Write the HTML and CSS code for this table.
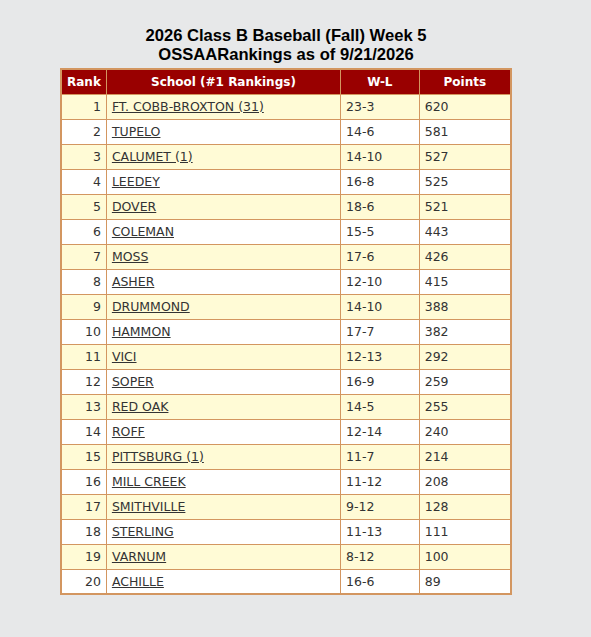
FILE: index.html
```html
<!DOCTYPE html>
<html lang="en">
<head>
    <meta charset="UTF-8">
    <title>2026 Class B Baseball (Fall) Week 5</title>
    <link rel="stylesheet" href="styles.css">
</head>
<body>
    <div class="wrap">
        <h2 class="title">2026 Class B Baseball (Fall) Week 5<br>OSSAARankings as of 9/21/2026</h2>
        <table class="rankings">
            <thead>
                <tr>
                    <th class="c-rank">Rank</th>
                    <th class="c-school">School (#1 Rankings)</th>
                    <th class="c-wl">W-L</th>
                    <th class="c-pts">Points</th>
                </tr>
            </thead>
            <tbody>
                <tr class="odd"><td class="rank">1</td><td><a href="#">FT. COBB-BROXTON (31)</a></td><td>23-3</td><td>620</td></tr>
                <tr><td class="rank">2</td><td><a href="#">TUPELO</a></td><td>14-6</td><td>581</td></tr>
                <tr class="odd"><td class="rank">3</td><td><a href="#">CALUMET (1)</a></td><td>14-10</td><td>527</td></tr>
                <tr><td class="rank">4</td><td><a href="#">LEEDEY</a></td><td>16-8</td><td>525</td></tr>
                <tr class="odd"><td class="rank">5</td><td><a href="#">DOVER</a></td><td>18-6</td><td>521</td></tr>
                <tr><td class="rank">6</td><td><a href="#">COLEMAN</a></td><td>15-5</td><td>443</td></tr>
                <tr class="odd"><td class="rank">7</td><td><a href="#">MOSS</a></td><td>17-6</td><td>426</td></tr>
                <tr><td class="rank">8</td><td><a href="#">ASHER</a></td><td>12-10</td><td>415</td></tr>
                <tr class="odd"><td class="rank">9</td><td><a href="#">DRUMMOND</a></td><td>14-10</td><td>388</td></tr>
                <tr><td class="rank">10</td><td><a href="#">HAMMON</a></td><td>17-7</td><td>382</td></tr>
                <tr class="odd"><td class="rank">11</td><td><a href="#">VICI</a></td><td>12-13</td><td>292</td></tr>
                <tr><td class="rank">12</td><td><a href="#">SOPER</a></td><td>16-9</td><td>259</td></tr>
                <tr class="odd"><td class="rank">13</td><td><a href="#">RED OAK</a></td><td>14-5</td><td>255</td></tr>
                <tr><td class="rank">14</td><td><a href="#">ROFF</a></td><td>12-14</td><td>240</td></tr>
                <tr class="odd"><td class="rank">15</td><td><a href="#">PITTSBURG (1)</a></td><td>11-7</td><td>214</td></tr>
                <tr><td class="rank">16</td><td><a href="#">MILL CREEK</a></td><td>11-12</td><td>208</td></tr>
                <tr class="odd"><td class="rank">17</td><td><a href="#">SMITHVILLE</a></td><td>9-12</td><td>128</td></tr>
                <tr><td class="rank">18</td><td><a href="#">STERLING</a></td><td>11-13</td><td>111</td></tr>
                <tr class="odd"><td class="rank">19</td><td><a href="#">VARNUM</a></td><td>8-12</td><td>100</td></tr>
                <tr><td class="rank">20</td><td><a href="#">ACHILLE</a></td><td>16-6</td><td>89</td></tr>
            </tbody>
        </table>
    </div>
</body>
</html>
```

FILE: styles.css
```css
body {
    margin: 0;
    background-color: #e7e8e9;
    font-family: "DejaVu Sans", Verdana, sans-serif;
    font-size: 12.5px;
    color: #333;
}
.wrap {
    width: 572px;
    padding-top: 26px;
}
.title {
    margin: 0 0 4px;
    text-align: center;
    font-family: "Liberation Sans", Arial, sans-serif;
    font-size: 16.6px;
    line-height: 19px;
    font-weight: bold;
    color: #000;
}
.rankings {
    margin: 0 auto;
    width: 452px;
    border-collapse: collapse;
    border: 2px solid #d39660;
}
.rankings th,
.rankings td {
    border: 1px solid #d39660;
    height: 25px;
    padding: 0 5px;
    box-sizing: border-box;
}
.rankings th {
    background-color: #990000;
    color: #fff;
    font-size: 12px;
    font-weight: bold;
    text-align: center;
}
.rankings td {
    background-color: #fff;
}
.rankings tr.odd td {
    background-color: #fffbd6;
}
.rankings td.rank {
    text-align: right;
}
.rankings a {
    color: #333;
}
.c-rank { width: 44px; }
.c-school { width: 235px; }
.c-wl { width: 79px; }
.c-pts { width: 92px; }
```
